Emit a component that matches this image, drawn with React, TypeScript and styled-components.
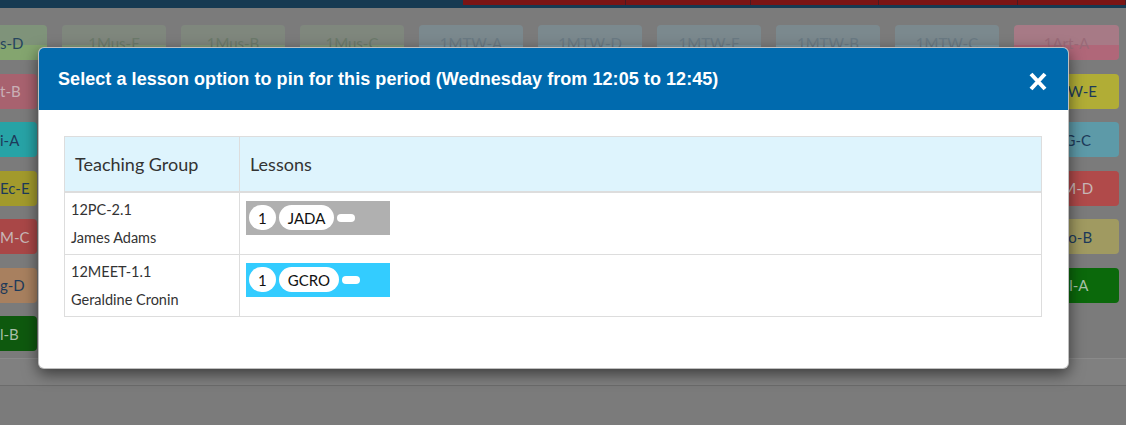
import React from "react";
import styled, { createGlobalStyle } from "styled-components";

const Global = createGlobalStyle`
  html, body { margin: 0; padding: 0; }
  body {
    width: 1126px;
    height: 425px;
    overflow: hidden;
    background: #7b7b7b;
    font-family: Lato, "Open Sans", sans-serif;
  }
`;

const Page = styled.div`
  position: relative;
  width: 1126px;
  height: 425px;
  overflow: hidden;
  background: #7b7b7b;
`;

const TopBar = styled.div`
  height: 8px;
  background: #163a52;
  display: flex;
  justify-content: flex-end;
`;

const RedGroup = styled.div`
  display: flex;
  width: 663px;
  height: 5px;
`;

const RedButton = styled.div<{ $w: number }>`
  width: ${(p) => p.$w}px;
  height: 5px;
  background: #7a1515;
  border-right: 1px solid #4a1a22;
  box-sizing: border-box;
`;

const ChipRow = styled.div`
  display: flex;
  gap: 15px;
  margin: 17px 0 0 0;
`;

const Chip = styled.div<{ $bg: string; $fade?: string; $fg: string; $w?: number; $edge?: boolean }>`
  flex: none;
  width: ${(p) => p.$w ?? 104}px;
  height: 35px;
  box-sizing: border-box;
  border-radius: ${(p) => (p.$edge ? "0 4px 4px 0" : "4px")};
  background: ${(p) =>
    p.$fade ? `linear-gradient(to bottom, ${p.$fade} 0 20px, ${p.$bg} 20px)` : p.$bg};
  color: ${(p) => p.$fg};
  font-family: Lato, sans-serif;
  font-size: 15px;
  display: flex;
  align-items: center;
  justify-content: ${(p) => (p.$edge ? "flex-start" : "center")};
  white-space: nowrap;
`;

const Sides = styled.div`
  display: flex;
  justify-content: space-between;
  height: 298px;
  padding-top: 13.5px;
  box-sizing: border-box;
`;

const SideColumn = styled.div<{ $left?: boolean }>`
  display: flex;
  flex-direction: column;
  gap: 13.5px;
  margin-right: ${(p) => (p.$left ? "0" : "7px")};
`;

const Footer = styled.div`
  height: 26px;
  background: #808080;
  border-top: 1px solid #8a8a8a;
  border-bottom: 1px solid #6c6c6c;
`;

const Modal = styled.div`
  position: absolute;
  left: 38px;
  top: 47px;
  width: 1031px;
  background: #fff;
  border-radius: 6px;
  border: 1px solid rgba(0, 0, 0, 0.25);
  box-sizing: border-box;
  box-shadow: 0 5px 15px rgba(0, 0, 0, 0.55);
  overflow: hidden;
`;

const Header = styled.div`
  height: 62px;
  background: #006aae;
  display: flex;
  align-items: center;
  justify-content: space-between;
  padding: 0 20px 0 19px;
`;

const Title = styled.h4`
  margin: 0;
  color: #fff;
  font-family: "Liberation Sans", Arial, sans-serif;
  font-weight: bold;
  font-size: 18px;
  letter-spacing: 0.06px;
`;

const Close = styled.button`
  border: 0;
  background: none;
  padding: 0;
  margin-top: 5px;
  width: 20px;
  height: 20px;
  display: flex;
  align-items: center;
  justify-content: center;
  cursor: pointer;
`;

const Body = styled.div`
  padding: 26px 26px 51px 25px;
`;

const Table = styled.table`
  width: 100%;
  border-collapse: collapse;
  border: 1px solid #ddd;
  font-family: Lato, sans-serif;
  color: #333;
`;

const Th = styled.th<{ $w?: number }>`
  width: ${(p) => (p.$w ? `${p.$w}px` : "auto")};
  background: #def4fd;
  text-align: left;
  font-weight: normal;
  font-size: 18px;
  height: 55px;
  padding: 0 10px;
  border: 1px solid #ddd;
  border-bottom: 2px solid #ddd;
  box-sizing: border-box;
`;

const Td = styled.td`
  border: 1px solid #ddd;
  padding: 3px 6px 2px;
  vertical-align: top;
  height: 57px;
  font-size: 14.5px;
  line-height: 28px;
  box-sizing: border-box;
`;

const LessonTd = styled.td`
  border: 1px solid #ddd;
  padding: 8px 6px;
  vertical-align: top;
`;

const LessonBar = styled.div<{ $bg: string }>`
  width: 144px;
  height: 34px;
  background: ${(p) => p.$bg};
  display: flex;
  align-items: center;
  gap: 3px;
  padding-left: 3px;
  box-sizing: border-box;
`;

const Pill = styled.span`
  background: #fff;
  border-radius: 13px;
  height: 25px;
  padding: 0 9px;
  display: flex;
  align-items: center;
  font-size: 15px;
  color: #111;
`;

const Dash = styled.span`
  width: 18px;
  height: 8px;
  border-radius: 4px;
  background: #fff;
`;

const topChips = [
  { t: "s-D", fade: "#7f937a", bg: "#84a56f", fg: "#26455e", w: 47, edge: true },
  { t: "1Mus-E", fade: "#7f877d", bg: "#849a7c", fg: "#6c7a6b" },
  { t: "1Mus-B", fade: "#7f877d", bg: "#849a7c", fg: "#6c7a6b" },
  { t: "1Mus-C", fade: "#7f877d", bg: "#849a7c", fg: "#6c7a6b" },
  { t: "1MTW-A", fade: "#7b898e", bg: "#7e98a2", fg: "#6a7a84" },
  { t: "1MTW-D", fade: "#7b898e", bg: "#7e98a2", fg: "#6a7a84" },
  { t: "1MTW-F", fade: "#7b898e", bg: "#7e98a2", fg: "#6a7a84" },
  { t: "1MTW-B", fade: "#7b898e", bg: "#7e98a2", fg: "#6a7a84" },
  { t: "1MTW-C", fade: "#7b898e", bg: "#7e98a2", fg: "#6a7a84" },
  { t: "1Art-A", fade: "#a77a86", bg: "#b06779", fg: "#9a6a78", w: 105 },
];

const leftChips = [
  { t: "t-B", bg: "#a8626f", fg: "#c9b0b6" },
  { t: "i-A", bg: "#27a3a6", fg: "#1d3a5a" },
  { t: "Ec-E", bg: "#a29a2c", fg: "#1d3a5a" },
  { t: "M-C", bg: "#a94747", fg: "#c8b8b8" },
  { t: "g-D", bg: "#a8805f", fg: "#1d3a5a" },
  { t: "l-B", bg: "#0e590e", fg: "#a9bfa9" },
];

const rightChips = [
  { t: "1MTW-E", bg: "#b1ad36", fg: "#1d3a5a" },
  { t: "1MG-C", bg: "#5d9aa8", fg: "#1d3a5a" },
  { t: "1MM-D", bg: "#b04a4a", fg: "#c8b8b8" },
  { t: "1Geo-B", bg: "#a09a61", fg: "#1d3a5a" },
  { t: "1Sel-A", bg: "#0b690b", fg: "#a9c2a9" },
];

const rows = [
  { group: "12PC-2.1", teacher: "James Adams", code: "JADA", bg: "#b0b0b0" },
  { group: "12MEET-1.1", teacher: "Geraldine Cronin", code: "GCRO", bg: "#33ccff" },
];

export default function App() {
  return (
    <Page>
      <Global />
      <TopBar>
        <RedGroup>
          <RedButton $w={163} />
          <RedButton $w={125} />
          <RedButton $w={128} />
          <RedButton $w={139} />
          <RedButton $w={108} />
        </RedGroup>
      </TopBar>
      <ChipRow>
        {topChips.map((c) => (
          <Chip key={c.t} $bg={c.bg} $fade={c.fade} $fg={c.fg} $w={c.w} $edge={c.edge}>
            {c.t}
          </Chip>
        ))}
      </ChipRow>
      <Sides>
        <SideColumn $left>
          {leftChips.map((c) => (
            <Chip key={c.t} $bg={c.bg} $fg={c.fg} $w={37} $edge>
              {c.t}
            </Chip>
          ))}
        </SideColumn>
        <SideColumn>
          {rightChips.map((c) => (
            <Chip key={c.t} $bg={c.bg} $fg={c.fg} $w={105}>
              {c.t}
            </Chip>
          ))}
        </SideColumn>
      </Sides>
      <Footer />
      <Modal>
        <Header>
          <Title>Select a lesson option to pin for this period (Wednesday from 12:05 to 12:45)</Title>
          <Close aria-label="Close">
            <svg width="18" height="19" viewBox="0 0 18 19">
              <path d="M2 2 L16 17 M16 2 L2 17" stroke="#fff" strokeWidth="4" strokeLinecap="butt" />
            </svg>
          </Close>
        </Header>
        <Body>
          <Table>
            <thead>
              <tr>
                <Th $w={175}>Teaching Group</Th>
                <Th>Lessons</Th>
              </tr>
            </thead>
            <tbody>
              {rows.map((r) => (
                <tr key={r.group}>
                  <Td>
                    <div>{r.group}</div>
                    <div>{r.teacher}</div>
                  </Td>
                  <LessonTd>
                    <LessonBar $bg={r.bg}>
                      <Pill>1</Pill>
                      <Pill>{r.code}</Pill>
                      <Dash />
                    </LessonBar>
                  </LessonTd>
                </tr>
              ))}
            </tbody>
          </Table>
        </Body>
      </Modal>
    </Page>
  );
}
